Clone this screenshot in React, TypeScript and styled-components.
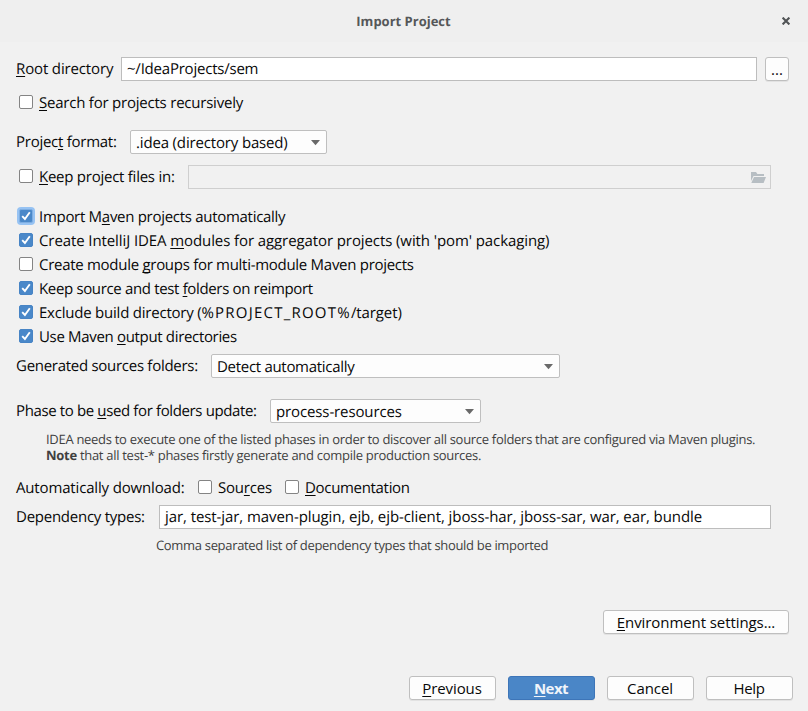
import React from 'react';
import styled, { createGlobalStyle, css } from 'styled-components';

const GlobalStyle = createGlobalStyle`
  * { box-sizing: border-box; }
  body {
    margin: 0;
    background: #f1f1f1;
    font-family: "Open Sans", "Noto Sans", sans-serif;
    font-size: 15px;
    line-height: 20px;
    color: #080808;
    text-rendering: geometricPrecision;
    font-kerning: normal;
  }
`;

const Dialog = styled.main`
  width: 808px;
  height: 711px;
  display: flex;
  flex-direction: column;
  overflow: hidden;
  background: #f1f1f1;
`;

const TitleBar = styled.header`
  flex: none;
  height: 42px;
  display: grid;
  grid-template-columns: 40px 1fr 40px;
  align-items: center;
  background: #efefef;
`;

const Title = styled.h1`
  grid-column: 2;
  margin: 0;
  padding-right: 1px;
  text-align: center;
  font-size: 13px;
  font-weight: 700;
  line-height: 20px;
  color: #555759;
`;

const CloseButton = styled.button`
  width: 20px;
  height: 20px;
  margin-left: 8px;
  padding: 6px;
  border: 0;
  background: none;
  display: flex;
`;

const Form = styled.section`
  flex: none;
  height: 592px;
  padding: 15px 19px 0 16px;
  display: flex;
  flex-direction: column;
`;

const Row = styled.div<{ $top?: number }>`
  flex: none;
  display: flex;
  align-items: center;
  height: 24px;
  margin-top: ${p => p.$top ?? 0}px;
`;

const Text = styled.span<{ $track?: number }>`
  white-space: pre;
  letter-spacing: ${p => p.$track ?? 0}px;
`;

const Label = styled.label<{ $width: number; $drop?: boolean }>`
  flex: none;
  width: ${p => p.$width}px;
  padding-top: ${p => (p.$drop ? 2 : 0)}px;
`;

const Mnemonic = styled.span`
  text-decoration: underline;
  text-decoration-thickness: 1px;
  text-underline-offset: 2px;
  text-decoration-skip-ink: none;
`;

const TextField = styled.div<{ $width: number; $disabled?: boolean }>`
  flex: none;
  width: ${p => p.$width}px;
  height: 24px;
  padding: 0 4px 0 5px;
  display: flex;
  align-items: center;
  background: #fff;
  border: 1px solid #bdbdbd;
  ${p => p.$disabled && css`
    justify-content: flex-end;
    margin-top: 2px;
    background: #f1f1f1;
    border-color: #cfcfcf;
  `}
`;

const Combo = styled.div<{ $width: number }>`
  flex: none;
  width: ${p => p.$width}px;
  height: 24px;
  padding: 1px 5px 0 5px;
  display: flex;
  align-items: center;
  justify-content: space-between;
  background: #fdfdfd;
  border: 1px solid #bfbfbf;
  border-radius: 2px;
`;

const Button = styled.button<{ $width: number; $primary?: boolean }>`
  flex: none;
  width: ${p => p.$width}px;
  height: 24px;
  padding: 0;
  display: flex;
  align-items: center;
  justify-content: center;
  font: inherit;
  line-height: 20px;
  color: inherit;
  background: #fdfdfd;
  border: 1px solid #bfbfbf;
  border-radius: 3px;
  box-shadow: 0 1px 0 #e2e2e2;
  ${p => p.$primary && css`
    font-weight: 700;
    color: #f0f4fa;
    background: #4a86c7;
    border-color: #3d75b8;
  `}
`;

const BrowseButton = styled(Button)`
  margin-left: 8px;
`;

const FooterButton = styled(Button)`
  padding-right: 1px;
`;

const CheckItem = styled.label<{ $width?: number }>`
  flex: none;
  display: flex;
  align-items: center;
  gap: 6px;
  padding-left: 3px;
  width: ${p => (p.$width ? `${p.$width}px` : 'auto')};
`;

const CheckCaption = styled.span`
  padding-top: 2px;
  white-space: nowrap;
`;

const Box = styled.span<{ $on?: boolean; $focus?: boolean }>`
  flex: none;
  width: 14px;
  height: 14px;
  display: flex;
  align-items: center;
  justify-content: center;
  background: ${p => (p.$on ? '#4a88c9' : '#fff')};
  border: 1px solid ${p => (p.$on ? (p.$focus ? '#7eaee2' : '#4784c5') : '#848484')};
  border-radius: 2px;
  box-shadow: ${p => (p.$focus ? '0 0 0 2px #97c3f3' : 'none')};
`;

const OptionList = styled.div`
  flex: none;
  margin-top: 16px;
`;

const Hint = styled.p<{ $top: number; $indent: number }>`
  flex: none;
  margin: ${p => p.$top}px 0 0 ${p => p.$indent}px;
  font-size: 13px;
  line-height: 16px;
  color: #3f3f3f;
`;

const HintLine = styled.span<{ $track: number }>`
  display: block;
  white-space: pre;
  letter-spacing: ${p => p.$track}px;
`;

const EnvironmentRow = styled.div`
  display: flex;
  justify-content: flex-end;
  margin-top: 57px;
`;

const Footer = styled.footer`
  display: flex;
  justify-content: flex-end;
  gap: 12px;
  padding: 42px 15px 0 0;
`;

/* Renders a caption, underlining the character that follows "&". */
function Caption({ text, track }: { text: string; track?: number }) {
  const at = text.indexOf('&');
  if (at < 0) return <Text $track={track}>{text}</Text>;
  return (
    <Text $track={track}>
      {text.slice(0, at)}
      <Mnemonic>{text[at + 1]}</Mnemonic>
      {text.slice(at + 2)}
    </Text>
  );
}

interface CheckProps { label: React.ReactNode; on?: boolean; focus?: boolean; width?: number }

function Check({ label, on, focus, width }: CheckProps) {
  return (
    <CheckItem $width={width}>
      <Box $on={on} $focus={focus}>
        {on && (
          <svg width="12" height="12" viewBox="0 0 12 12" fill="none">
            <path d="M2.2 6.2 4.9 9 9.8 2.2" stroke="#fff" strokeWidth="1.9" />
          </svg>
        )}
      </Box>
      <CheckCaption>{label}</CheckCaption>
    </CheckItem>
  );
}

function Select({ text, track, width }: { text: string; track: number; width: number }) {
  return (
    <Combo $width={width}>
      <Text $track={track}>{text}</Text>
      <svg width="10" height="6" viewBox="0 0 10 6"><path d="M0 0h9L4.5 5.3Z" fill="#696969" /></svg>
    </Combo>
  );
}

const mavenOptions: CheckProps[] = [
  { label: <Caption text="Import M&aven projects automatically" track={-0.29} />, on: true, focus: true },
  { label: <Caption text="Create IntelliJ IDEA &modules for aggregator projects (with 'pom' packaging)" track={-0.095} />, on: true },
  { label: <Caption text="Create module &groups for multi-module Maven projects" track={-0.285} /> },
  { label: <Caption text="Keep source and test &folders on reimport" track={-0.345} />, on: true },
  {
    label: (
      <>
        <Text $track={-0.22}>Exclude build directory (</Text>
        <Text $track={1.23}>%PROJECT_ROOT%</Text>
        <Text $track={-0.1}>/target)</Text>
      </>
    ),
    on: true,
  },
  { label: <Caption text="Use Maven &output directories" track={-0.33} />, on: true },
];

export default function App() {
  return (
    <>
      <GlobalStyle />
      <Dialog>
        <TitleBar>
          <Title>Import Project</Title>
          <CloseButton aria-label="Close">
            <svg width="8" height="8" viewBox="0 0 8 8"><path d="m.6.6 6.8 6.8M7.4.6.6 7.4" stroke="#505355" strokeWidth="2.1" /></svg>
          </CloseButton>
        </TitleBar>
        <Form>
          <Row>
            <Label $width={105}><Caption text="&Root directory" track={-0.14} /></Label>
            <TextField $width={636}><Text $track={-0.22}>~/IdeaProjects/sem</Text></TextField>
            <BrowseButton $width={24}>...</BrowseButton>
          </Row>
          <Row $top={9}><Check label={<Caption text="&Search for projects recursively" track={-0.22} />} /></Row>
          <Row $top={16}>
            <Label $width={114}><Caption text="Projec&t format:" track={-0.26} /></Label>
            <Select text=".idea (directory based)" track={-0.16} width={197} />
          </Row>
          <Row $top={10}>
            <Check label={<Caption text="&Keep project files in:" track={-0.25} />} width={172} />
            <TextField $width={583} $disabled>
              <svg width="15" height="11" viewBox="0 0 15 11" fill="#b7bec3">
                <path d="M0 0h5l1.4 2H13v2H2.5L0 9Z" />
                <path d="M3 5h12l-2.4 6H.3Z" />
              </svg>
            </TextField>
          </Row>
          <OptionList>
            {mavenOptions.map((option, i) => <Row key={i}><Check {...option} /></Row>)}
          </OptionList>
          <Row $top={6}>
            <Label $width={195}><Caption text="Generated sources folders:" track={-0.28} /></Label>
            <Select text="Detect automatically" track={-0.3} width={349} />
          </Row>
          <Row $top={21}>
            <Label $width={254}><Caption text="Phase to be &used for folders update:" track={-0.37} /></Label>
            <Select text="process-resources" track={-0.12} width={211} />
          </Row>
          <Hint $top={8} $indent={30}>
            <HintLine $track={-0.295}>IDEA needs to execute one of the listed phases in order to discover all source folders that are configured via Maven plugins.</HintLine>
            <HintLine $track={-0.29}><b>Note</b> that all test-* phases firstly generate and compile production sources.</HintLine>
          </Hint>
          <Row $top={12}>
            <Label as="span" $width={179} $drop><Caption text="Automatically download:" track={-0.16} /></Label>
            <Check label={<Caption text="Sou&rces" track={-0.2} />} width={87} />
            <Check label={<Caption text="&Documentation" track={-0.32} />} />
          </Row>
          <Row $top={6}>
            <Label $width={143}><Caption text="Dependency types:" track={-0.25} /></Label>
            <TextField $width={612}><Text $track={-0.08}>jar, test-jar, maven-plugin, ejb, ejb-client, jboss-har, jboss-sar, war, ear, bundle</Text></TextField>
          </Row>
          <Hint $top={8} $indent={140}>
            <HintLine $track={-0.32}>Comma separated list of dependency types that should be imported</HintLine>
          </Hint>
          <EnvironmentRow>
            <Button $width={186}><Caption text="&Environment settings..." track={-0.08} /></Button>
          </EnvironmentRow>
        </Form>
        <Footer>
          <FooterButton $width={87}><Caption text="&Previous" track={-0.1} /></FooterButton>
          <FooterButton $width={87} $primary><Caption text="&Next" track={-0.5} /></FooterButton>
          <FooterButton $width={87}><Caption text="Cancel" track={-0.1} /></FooterButton>
          <FooterButton $width={87}><Caption text="Help" track={-0.3} /></FooterButton>
        </Footer>
      </Dialog>
    </>
  );
}
